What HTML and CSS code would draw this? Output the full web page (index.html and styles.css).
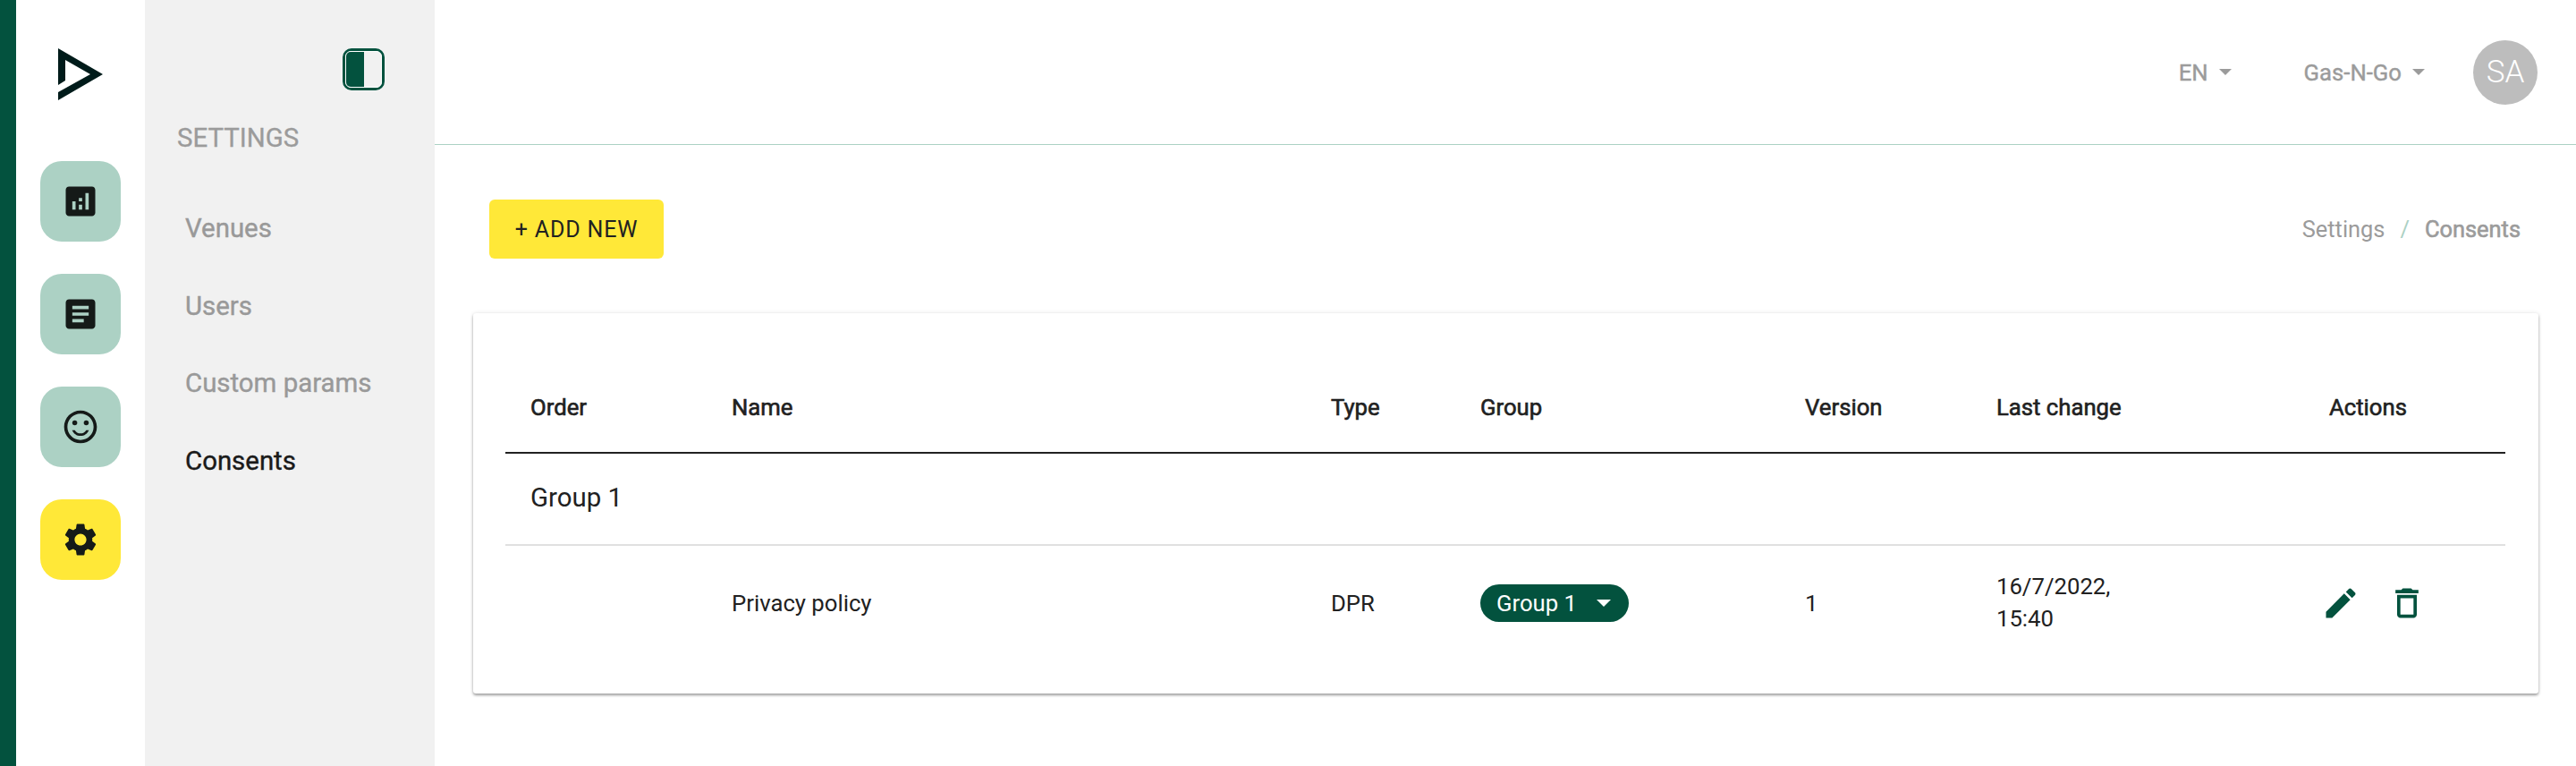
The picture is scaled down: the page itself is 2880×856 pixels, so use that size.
FILE: index.html
```html
<!DOCTYPE html>
<html lang="en">
<head>
<meta charset="utf-8">
<title>Consents</title>
<link rel="stylesheet" href="styles.css">
</head>
<body>
<div class="app">
  <aside class="rail">
    <svg class="logo" viewBox="0 0 50 58"><polygon points="0,0 50,29 0,58 0,49 36,29 8,13 8,36 0,41"/></svg>
    <nav class="rail-nav">
      <a class="rail-btn"><svg viewBox="0 0 24 24"><path d="M19 3H5c-1.1 0-2 .9-2 2v14c0 1.1.9 2 2 2h14c1.1 0 2-.9 2-2V5c0-1.1-.9-2-2-2zM9 17H7v-5h2v5zm4 0h-2v-3h2v3zm0-5h-2v-2h2v2zm4 5h-2V7h2v10z"/></svg></a>
      <a class="rail-btn"><svg viewBox="0 0 24 24"><path d="M19 3H5c-1.1 0-2 .9-2 2v14c0 1.1.9 2 2 2h14c1.1 0 2-.9 2-2V5c0-1.1-.9-2-2-2zm-5 14H7v-2h7v2zm3-4H7v-2h10v2zm0-4H7V7h10v2z"/></svg></a>
      <a class="rail-btn"><svg viewBox="0 0 24 24"><circle cx="15.5" cy="9.5" r="1.5"/><circle cx="8.5" cy="9.5" r="1.5"/><path d="M11.99 2C6.47 2 2 6.48 2 12s4.47 10 9.99 10C17.52 22 22 17.52 22 12S17.52 2 11.99 2zM12 20c-4.42 0-8-3.58-8-8s3.58-8 8-8 8 3.58 8 8-3.58 8-8 8zm0-4c-1.48 0-2.75-.81-3.45-2H6.88c.8 2.05 2.79 3.5 5.12 3.5s4.32-1.45 5.12-3.5h-1.67c-.7 1.19-1.97 2-3.45 2z"/></svg></a>
      <a class="rail-btn rail-btn-active"><svg viewBox="0 0 24 24"><path d="M19.14 12.94c.04-.3.06-.61.06-.94 0-.32-.02-.64-.07-.94l2.03-1.58c.18-.14.23-.41.12-.61l-1.92-3.32c-.12-.22-.37-.29-.59-.22l-2.39.96c-.5-.38-1.03-.7-1.62-.94l-.36-2.54c-.04-.24-.24-.41-.48-.41h-3.84c-.24 0-.43.17-.47.41l-.36 2.54c-.59.24-1.13.57-1.62.94l-2.39-.96c-.22-.08-.47 0-.59.22L2.74 8.87c-.12.21-.08.47.12.61l2.03 1.58c-.05.3-.09.63-.09.94s.02.64.07.94l-2.03 1.58c-.18.14-.23.41-.12.61l1.92 3.32c.12.22.37.29.59.22l2.39-.96c.5.38 1.03.7 1.62.94l.36 2.54c.05.24.24.41.48.41h3.84c.24 0 .44-.17.47-.41l.36-2.54c.59-.24 1.13-.56 1.62-.94l2.39.96c.22.08.47 0 .59-.22l1.92-3.32c.12-.22.07-.47-.12-.61l-2.01-1.58zM12 15.6c-1.98 0-3.6-1.62-3.6-3.6s1.62-3.6 3.6-3.6 3.6 1.62 3.6 3.6-1.62 3.6-3.6 3.6z"/></svg></a>
    </nav>
  </aside>
  <aside class="side">
    <div class="toggle"><div class="toggle-inner"><div class="toggle-fill"></div></div></div>
    <h2 class="side-title">SETTINGS</h2>
    <ul class="side-nav">
      <li>Venues</li>
      <li>Users</li>
      <li>Custom params</li>
      <li class="side-current">Consents</li>
    </ul>
  </aside>
  <main class="main">
    <header class="topbar">
      <span class="menu menu-lang">EN<i class="caret"></i></span>
      <span class="menu menu-org">Gas-N-Go<i class="caret"></i></span>
      <span class="avatar">SA</span>
    </header>
    <section class="content">
      <div class="toolbar">
        <button class="add-btn">+ ADD NEW</button>
        <div class="crumbs"><span>Settings</span><span class="crumb-sep">/</span><span class="crumb-current">Consents</span></div>
      </div>
      <div class="card">
        <table class="table">
          <colgroup>
            <col class="c-order"><col class="c-name"><col class="c-type"><col class="c-group"><col class="c-version"><col class="c-last"><col class="c-actions">
          </colgroup>
          <thead>
            <tr><th>Order</th><th>Name</th><th>Type</th><th>Group</th><th>Version</th><th>Last change</th><th>Actions</th></tr>
          </thead>
          <tbody>
            <tr class="group-row"><td colspan="7">Group 1</td></tr>
            <tr class="data-row">
              <td></td>
              <td>Privacy policy</td>
              <td>DPR</td>
              <td><span class="pill">Group 1<i class="caret caret-white"></i></span></td>
              <td>1</td>
              <td class="date-cell">16/7/2022,<br>15:40</td>
              <td>
                <div class="actions">
                  <svg viewBox="0 0 24 24"><path d="M3 17.25V21h3.75L17.81 9.94l-3.75-3.75L3 17.25zM20.71 7.04c.39-.39.39-1.02 0-1.41l-2.34-2.34c-.39-.39-1.02-.39-1.41 0l-1.83 1.83 3.75 3.75 1.83-1.83z"/></svg>
                  <svg viewBox="0 0 24 24"><path d="M6 19c0 1.1.9 2 2 2h8c1.1 0 2-.9 2-2V7H6v12zM8 9h8v10H8V9zm7.5-5l-1-1h-5l-1 1H5v2h14V4z"/></svg>
                </div>
              </td>
            </tr>
          </tbody>
        </table>
      </div>
    </section>
  </main>
</div>
</body>
</html>
```
FILE: styles.css
```css
* { box-sizing: border-box; }
html, body { margin: 0; height: 100%; }
body { font-family: Roboto, "Liberation Sans", sans-serif; color: #212121; background: #fff; }
.app { display: flex; height: 856px; overflow: hidden; }

.rail { width: 162px; flex: none; border-left: 18px solid #03523e; background: #fff; display: flex; flex-direction: column; align-items: center; padding: 54px 18px 0 0; }
.logo { width: 50px; height: 58px; fill: #001b1a; margin-left: 18px; flex: none; }
.rail-nav { display: flex; flex-direction: column; gap: 36px; margin-top: 68px; margin-left: 18px; }
.rail-btn { width: 90px; height: 90px; border-radius: 24px; background: #acd1c4; display: flex; align-items: center; justify-content: center; }
.rail-btn svg { width: 44px; height: 44px; fill: #151a18; }
.rail-btn-active { background: #ffe838; }

.side { width: 324px; flex: none; background: #f1f1f1; padding: 54px 56px 0 36px; }
.toggle { width: 47px; height: 47px; margin-left: auto; border: 3px solid #03523e; border-radius: 10px; }
.toggle-inner { height: 100%; border: 1px solid #fff; border-radius: 6px; overflow: hidden; }
.toggle-fill { width: 50%; height: 100%; background: #03523e; }
.side-title { margin: 36px 0 0; font-size: 29.4px; line-height: 34px; font-weight: 400; color: #9b9b9b; -webkit-text-stroke: .3px currentColor; }
.side-nav { list-style: none; margin: 68px 0 0; padding: 0 0 0 9px; display: flex; flex-direction: column; gap: 53.5px; }
.side-nav li { font-size: 29.4px; line-height: 33px; font-weight: 400; color: #999; white-space: nowrap; -webkit-text-stroke: .4px currentColor; }
.side-nav .side-current { color: #1a1a1a; }

.main { flex: 1; min-width: 0; display: flex; flex-direction: column; }
.topbar { height: 162px; flex: none; border-bottom: 1px solid #acd1c4; display: flex; align-items: center; padding: 0 43px 0 0; justify-content: flex-end; }
.menu { display: flex; align-items: center; font-size: 25.7px; font-weight: 400; color: #9b9b9b; -webkit-text-stroke: .4px currentColor; }
.menu-org { margin-left: 81px; }
.caret { display: inline-block; width: 0; height: 0; border-left: 7px solid transparent; border-right: 7px solid transparent; border-top: 7px solid #9b9b9b; margin-left: 12px; }
.avatar { width: 72px; height: 72px; margin-left: 54px; border-radius: 50%; background: #bdbdbd; color: #fff; font-size: 35px; font-weight: 300; display: flex; align-items: center; justify-content: center; }

.content { flex: 1; padding-top: 61px; }
.toolbar { display: flex; align-items: center; justify-content: space-between; padding: 0 62px 0 61px; }
.add-btn { width: 195px; height: 66px; border: 0; border-radius: 6px; background: #ffe838; color: #212121; font: 400 25px Roboto, sans-serif; letter-spacing: .85px; padding: 0; }
.crumbs { display: flex; gap: 17px; font-size: 25.4px; color: #9b9b9b; }
.crumb-sep { color: #acd1c4; }
.crumb-current { font-weight: 400; -webkit-text-stroke: .6px currentColor; }

.card { margin: 61px 42px 0 43px; padding: 56px 37px 38px 36px; background: #fff; border-radius: 3px; box-shadow: 0 2px 3px rgba(0,0,0,.35), 0 0 5px rgba(0,0,0,.1); }
.table { width: 2236px; table-layout: fixed; border-collapse: collapse; font-size: 25.7px; }
.c-order { width: 225px; } .c-name { width: 670px; } .c-type { width: 167px; } .c-group { width: 363px; }
.c-version { width: 214px; } .c-last { width: 372px; } .c-actions { width: 225px; }
.table th, .table td { padding: 0 0 0 28px; text-align: left; }
.table th { height: 100px; padding-bottom: 2px; font-weight: 400; -webkit-text-stroke: .6px currentColor; border-bottom: 2px solid #212121; }
.group-row td { height: 103px; padding-bottom: 3px; font-size: 29.4px; border-bottom: 2px solid #e0e0e0; }
.data-row td { height: 128px; line-height: 36px; }
.data-row .date-cell { padding-bottom: 2px; }
.pill { display: inline-flex; align-items: center; width: 166px; height: 42px; padding-left: 18px; border-radius: 21px; background: #03523e; color: #fff; }
.caret-white { border-top-color: #fff; margin-left: 22px; border-left-width: 8px; border-right-width: 8px; border-top-width: 8px; }
.actions { display: flex; gap: 30px; margin-left: -9px; }
.actions svg { width: 44px; height: 44px; fill: #03523e; }
```
